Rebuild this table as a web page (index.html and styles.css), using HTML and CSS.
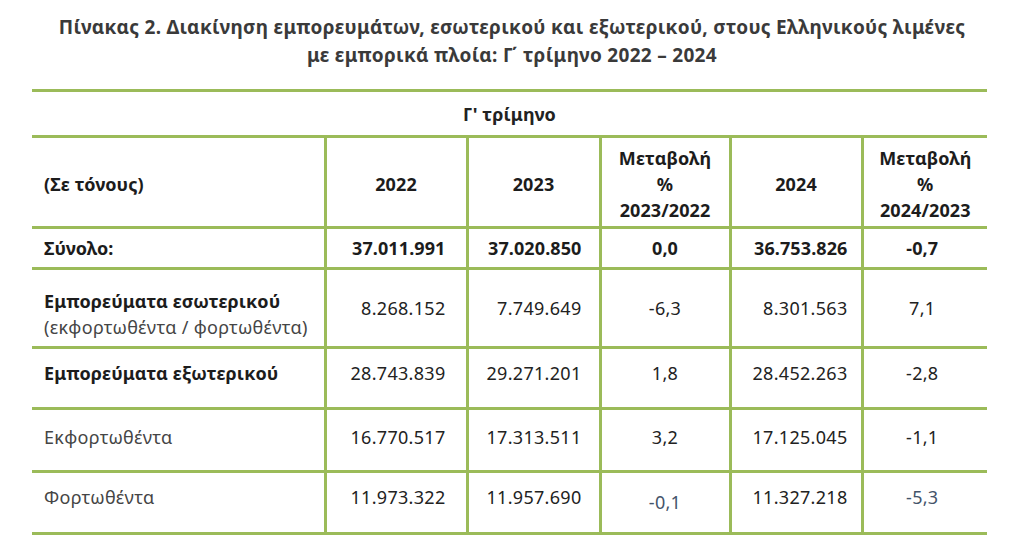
FILE: index.html
```html
<!DOCTYPE html>
<html lang="el">
<head>
<meta charset="utf-8">
<title>Πίνακας 2</title>
<link rel="stylesheet" href="styles.css">
</head>
<body>
<h1 class="title">Πίνακας 2. Διακίνηση εμπορευμάτων, εσωτερικού και εξωτερικού, στους Ελληνικούς λιμένες<br>με εμπορικά πλοία: Γ΄ τρίμηνο 2022 – 2024</h1>
<table class="grid">
  <colgroup>
    <col class="c-label"><col class="c-num"><col class="c-num2"><col class="c-chg"><col class="c-num3"><col class="c-chg2">
  </colgroup>
  <tr class="r-period"><td colspan="6" class="period">Γ' τρίμηνο</td></tr>
  <tr class="r-head">
    <td class="lbl b">(Σε τόνους)</td>
    <td class="ctr b">2022</td>
    <td class="ctr b">2023</td>
    <td class="ctr b">Μεταβολή<br>%<br>2023/2022</td>
    <td class="ctr b">2024</td>
    <td class="ctr b last">Μεταβολή<br>%<br>2024/2023</td>
  </tr>
  <tr class="r-total">
    <td class="lbl b">Σύνολο:</td>
    <td class="num p1 b">37.011.991</td>
    <td class="num p2 b">37.020.850</td>
    <td class="ctr b">0,0</td>
    <td class="num p3 b">36.753.826</td>
    <td class="ctr chg2 b last">-0,7</td>
  </tr>
  <tr class="r-dom">
    <td class="lbl two"><span class="b">Εμπορεύματα εσωτερικού</span><br><span class="sub">(εκφορτωθέντα / φορτωθέντα)</span></td>
    <td class="num p1">8.268.152</td>
    <td class="num p2">7.749.649</td>
    <td class="ctr">-6,3</td>
    <td class="num p3">8.301.563</td>
    <td class="ctr chg2 last">7,1</td>
  </tr>
  <tr class="r-ext">
    <td class="lbl b">Εμπορεύματα εξωτερικού</td>
    <td class="num p1">28.743.839</td>
    <td class="num p2">29.271.201</td>
    <td class="ctr">1,8</td>
    <td class="num p3">28.452.263</td>
    <td class="ctr chg2 last">-2,8</td>
  </tr>
  <tr class="r-unl">
    <td class="lbl sub">Εκφορτωθέντα</td>
    <td class="num p1">16.770.517</td>
    <td class="num p2">17.313.511</td>
    <td class="ctr">3,2</td>
    <td class="num p3">17.125.045</td>
    <td class="ctr chg2 last">-1,1</td>
  </tr>
  <tr class="r-load">
    <td class="lbl sub">Φορτωθέντα</td>
    <td class="num p1">11.973.322</td>
    <td class="num p2">11.957.690</td>
    <td class="ctr blue low">-0,1</td>
    <td class="num p3">11.327.218</td>
    <td class="ctr chg2 blue last">-5,3</td>
  </tr>
</table>
</body>
</html>
```
FILE: styles.css
```css
html, body {
  margin: 0;
  padding: 0;
  background: #ffffff;
}
body {
  font-family: "Noto Sans", "DejaVu Sans", sans-serif;
  color: #222222;
  width: 1024px;
  height: 557px;
  overflow: hidden;
}
.title {
  margin: 0;
  padding-top: 13px;
  font-size: 19px;
  letter-spacing: 0.3px;
  line-height: 28px;
  font-weight: 700;
  color: #3a3a3a;
  text-align: center;
}
.grid {
  margin: 20px 0 0 32px;
  width: 955px;
  table-layout: fixed;
  border-collapse: collapse;
  font-size: 18px;
  letter-spacing: 0.3px;
  line-height: 26px;
}
.c-label { width: 293px; }
.c-num { width: 142px; }
.c-num2 { width: 133px; }
.c-chg { width: 130px; }
.c-num3 { width: 132px; }
.c-chg2 { width: 125px; }
.grid td {
  border-top: 3px solid #9bbb59;
  border-bottom: 3px solid #9bbb59;
  border-left: 3px solid #9bbb59;
  padding: 0;
  vertical-align: middle;
  white-space: nowrap;
}
.grid td.lbl { border-left: none; padding-left: 12px; text-align: left; }
.grid td.last { border-right: none; }
.grid td.period {
  border-left: none;
  text-align: center;
  font-weight: 700;
  letter-spacing: 0.1px;
}
.r-period { height: 46px; }
.r-head { height: 91px; }
.r-total { height: 41px; }
.r-dom { height: 79px; }
.r-ext { height: 61px; }
.r-unl { height: 63px; }
.r-load { height: 62px; }
.b { font-weight: 700; color: #1c1c1c; letter-spacing: 0.1px; }
.sub { color: #454545; font-weight: 400; letter-spacing: 0.3px; }
.ctr { text-align: center; }
.num { text-align: right; }
.grid td.p1 { padding-right: 20px; }
.grid td.p2 { padding-right: 17px; }
.grid td.p3 { padding-right: 13px; }
.grid td.chg2 { padding-right: 6px; }
.blue { color: #44546a; }
.r-head td { padding-top: 4px; }
.grid td.two { padding-top: 11px; }
.r-ext td { padding-bottom: 11px; }
.r-unl td { padding-bottom: 7px; }
.r-load td { padding-bottom: 12px; }
.grid .r-load td.low { padding-bottom: 2px; }
```
